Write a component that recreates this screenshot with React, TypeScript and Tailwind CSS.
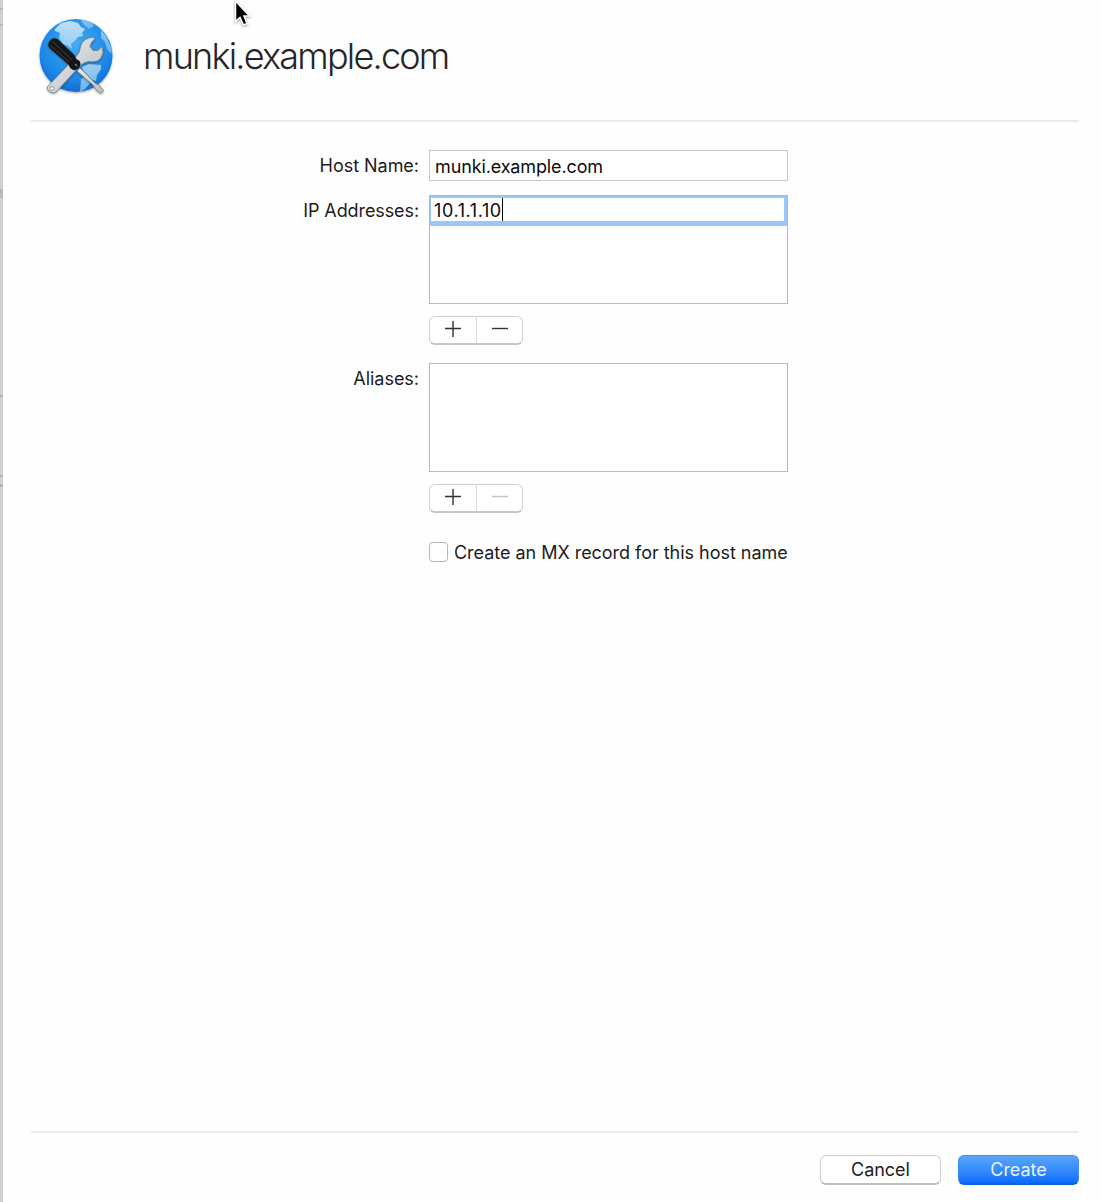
import React from "react";

const label = "w-[387px] shrink-0 text-right leading-[22px]";

function Icon() {
  return (
    <svg width="82" height="88" viewBox="0 0 82 88" className="block shrink-0">
      <defs>
        <radialGradient id="globe" cx="0.5" cy="0.35" r="0.68">
          <stop offset="0" stopColor="#43adf2" />
          <stop offset="0.7" stopColor="#1c88e8" />
          <stop offset="1" stopColor="#1068cc" />
        </radialGradient>
        <linearGradient id="steel" x1="0" y1="0" x2="1" y2="1">
          <stop offset="0" stopColor="#eef1f3" />
          <stop offset="1" stopColor="#b4babf" />
        </linearGradient>
        <linearGradient id="land" x1="0" y1="0" x2="0" y2="1">
          <stop offset="0" stopColor="#d0e8f8" />
          <stop offset="1" stopColor="#98cef6" />
        </linearGradient>
        <filter id="shadow" x="-20%" y="-20%" width="140%" height="140%">
          <feDropShadow dx="0" dy="1" stdDeviation="1" floodOpacity="0.35" />
        </filter>
        <clipPath id="disc"><circle cx="41" cy="46.500" r="36.500" /></clipPath>
      </defs>
      <circle cx="41" cy="46.500" r="36.500" fill="url(#globe)" filter="url(#shadow)" />
      <g clipPath="url(#disc)" fill="url(#land)">
        <path d="M20 20 L26 14 L35 12 L43 14 L46 18 L50 20 L47 24 L48 27 L43 28 L40 32 L36 35 L37 40 L33 37 L28 35 L24 29 L25 24 L20 22 Z" opacity="0.9" />
        <path d="M45 10 L55 12 L59 17 L54 20 L49 16 Z" opacity="0.55" />
        <path d="M66 21 L71 27 L77 40 L76 45 L72 40 L70 33 L66 29 Z" opacity="0.6" />
        <path d="M47 58 L54 55 L66 56 L66 60 L62 66 L61 72 L55 70 L49 64 Z M46 70 L50 68 L55 74 L50 80 L45 83 Z" opacity="0.7" />
      </g>
      <g filter="url(#shadow)">
        <path d="M13.500 76.500 L36 53 Q44.500 45 45 40 Q46 31 54 29 Q58 27.500 60 29.500 L56.500 33.500 L55 37.500 L58 41.500 L63 41.500 L67 37.500 Q69.500 44 66 49 Q62 54 54 52.500 Q49 52.500 44 58 L22 82 Q18 86 14 82 Q10.500 79.500 13.500 76.500 Z" fill="url(#steel)" stroke="#70777e" strokeWidth="0.8" />
        <circle cx="17" cy="79.500" r="2" fill="#eef4f8" stroke="#7e858b" strokeWidth="0.8" />
        <path d="M45 59 L60 74 L65 77 L68.500 81.500 L66 84.500 L61.500 81.500 L58 76 L42 62 Z" fill="url(#steel)" stroke="#70777e" strokeWidth="0.8" />
        <path d="M15 31.500 Q18 27.500 23 30.500 L39 45.500 L41.500 50 L44.500 52 Q46.500 55 44.500 58 Q42 62 38 61 L35 59 L33.500 55.500 L15 39.500 Q11.500 36 15 31.500 Z" fill="#151719" />
        <path d="M18 33 L37 51 M15.500 36.500 L34 53" stroke="#44484c" strokeWidth="0.9" fill="none" />
        <path d="M40 55 L42 57" stroke="#777b7e" strokeWidth="1.500" fill="none" />
      </g>
    </svg>
  );
}

function Stepper({ disabled = false }: { disabled?: boolean }) {
  return (
    <div className="flex h-[29px] w-[94px] rounded-[6px] border border-b-2 border-[#cfcfcf] border-b-[#c6c6c6] bg-white">
      <span className="flex w-[47px] items-center justify-center border-r border-[#d8d8d8]">
        <svg width="16" height="16" viewBox="0 0 16 16" className="relative -top-px"><path d="M0 7.500H16M8 0V16" stroke="#333" strokeWidth="1.400" /></svg>
      </span>
      <span className="flex flex-1 items-center justify-center">
        <svg width="16" height="16" viewBox="0 0 16 16" className="relative -top-px"><path d="M0 7.500H16" stroke={disabled ? "#c4c4c4" : "#333"} strokeWidth="1.400" /></svg>
      </span>
    </div>
  );
}

export default function App() {
  return (
    <div className="relative flex h-[1202px] w-[1102px] overflow-hidden bg-[#fefefe] font-['Inter',sans-serif] text-[18px] font-normal tracking-[-0.03px] text-[#1c1c1c]">
      <div className="flex w-[3px] shrink-0 flex-col bg-[#d0d0d0]">
        <div className="mt-[8px] h-[2px] bg-[#b9b9b9]" />
        <div className="mt-[14px] h-[2px] bg-[#b9b9b9]" />
        <div className="mt-[163px] h-[9px] bg-[#b9b9b9]" />
        <div className="mt-[197px] h-[2px] bg-[#b0b0b0]" />
        <div className="mt-[78px] h-[2px] bg-[#b4b4b4]" />
        <div className="mt-[7px] h-[3px] bg-[#b4b4b4]" />
      </div>
      <main className="flex w-[1076px] flex-col pl-[28px]">
        <header className="flex h-[122px] shrink-0 border-b-2 border-[#ebebeb] pl-[4px] pt-[9px]">
          <Icon />
          <h1 className="ml-[26px] mt-[23px] whitespace-nowrap text-[36px] font-[270] leading-[48px] tracking-[-1.78px] text-[#262626]">munki.example.com</h1>
        </header>
        <section className="flex flex-1 flex-col">
          <div className="mt-[28px] flex">
            <div className={label}><span className="relative left-px top-[5px]">Host Name:</span></div>
            <div className="ml-[11px] flex h-[31px] w-[359px] items-center whitespace-nowrap border border-[#c8c8c8] bg-white pl-[5px] pt-[3px] leading-[22px] tracking-[-0.13px] text-[#0c0c0c]">munki.example.com</div>
          </div>
          <div className="mt-[14px] flex">
            <div className={label}><span className="relative left-px top-[5px] tracking-[-0.1px]">IP Addresses:</span></div>
            <div className="ml-[11px] h-[109px] w-[359px] border border-[#b8b8b8] bg-white">
              <div className="flex h-[30px] items-center border-b-[5px] border-l border-r-[3px] border-t-2 border-[#9bc6fa] pl-[3px] leading-[22px] text-[#0c0c0c]">
                <span className="relative top-px tracking-[0.6px]">10.1.1.10</span><span className="h-[23px] w-px bg-black" />
              </div>
            </div>
          </div>
          <div className="ml-[398px] mt-[12px]"><Stepper /></div>
          <div className="mt-[18px] flex">
            <div className={label}><span className="relative left-px top-[5px]">Aliases:</span></div>
            <div className="ml-[11px] h-[109px] w-[359px] border border-[#b8b8b8] bg-white" />
          </div>
          <div className="ml-[398px] mt-[12px]"><Stepper disabled /></div>
          <label className="ml-[398px] mt-[29px] flex h-[20px] items-center">
            <span className="h-[20px] w-[19px] rounded-[4px] border border-[#b4b4b4] bg-white" />
            <span className="ml-[6px] whitespace-nowrap">Create an MX record for this host name</span>
          </label>
        </section>
        <footer className="flex h-[71px] shrink-0 justify-end gap-[17px] border-t-2 border-[#ebebeb] pt-[22px]">
          <button className="h-[30px] w-[121px] rounded-[6px] border border-b-2 border-[#cfcfcf] border-b-[#bfbfbf] bg-white leading-[26px]">Cancel</button>
          <button className="h-[30px] w-[121px] rounded-[6px] border border-b-2 border-[#3c8ff5] border-b-[#0a63df] bg-linear-to-b from-[#5aa6fb] to-[#096dfc] leading-[26px] text-[#e8f3ff]">Create</button>
        </footer>
      </main>
      <svg width="24" height="34" viewBox="0 0 24 34" className="absolute left-[231px] top-[-3px] drop-shadow-[0_1px_1px_rgba(0,0,0,0.4)]">
        <path d="M4.500 4 V24.500 L9 20.500 L12.500 28 L16 26.500 L13 19 H18.500 Z" fill="#000" stroke="#fff" strokeWidth="1.500" />
      </svg>
    </div>
  );
}
